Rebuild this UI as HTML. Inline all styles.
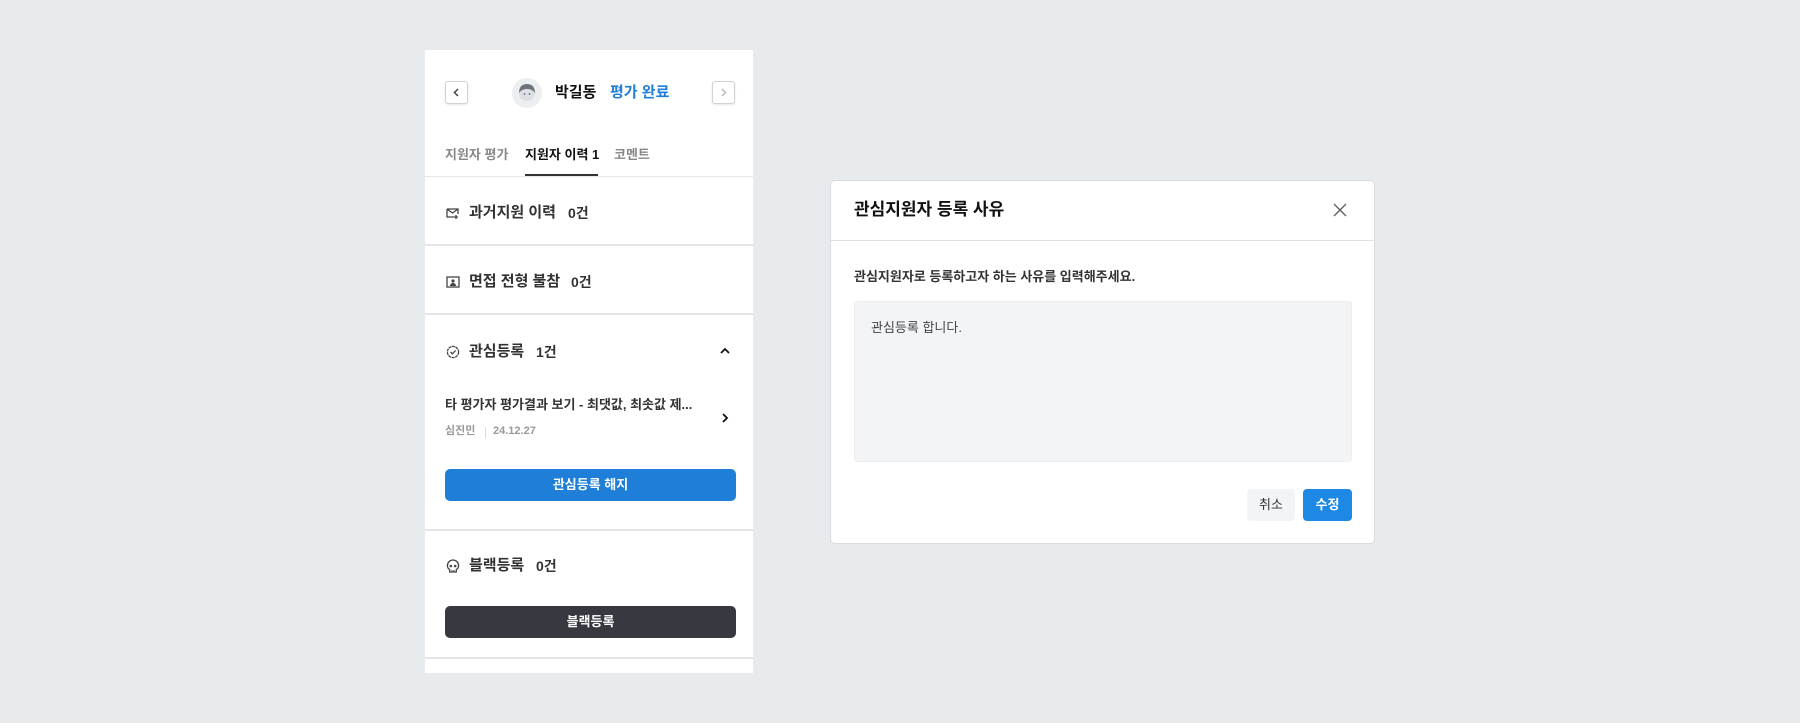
<!DOCTYPE html>
<html><head><meta charset="utf-8"><style>
*{margin:0;padding:0;box-sizing:border-box}
body{width:1800px;height:723px;background:#e8ebee;font-family:"Liberation Sans","Noto Sans CJK KR",sans-serif;position:relative;overflow:hidden;color:#222}
.a{position:absolute}
.panel{left:425px;top:50px;width:328px;height:623px;background:#fff}
.sep{left:425px;width:328px;height:2px;background:#e3e5e8}
.arr{width:23px;height:23px;border:1px solid #cfd2d6;border-radius:3px;background:#fff;box-shadow:0 1px 2px rgba(0,0,0,.1)}
.t{white-space:nowrap;line-height:1}
.row{font-size:15px;font-weight:bold;color:#333}
.cnt{font-size:14px;font-weight:bold;color:#333}
.btn{border-radius:5px;color:#fff;font-size:13px;font-weight:bold;text-align:center;line-height:32px}
</style></head><body>
<div class="a panel"></div>
<div class="a arr" style="left:445px;top:81px"><svg width="21" height="21" viewBox="0 0 21 21"><path d="M12 7l-3.5 3.5L12 14" fill="none" stroke="#444" stroke-width="1.5"/></svg></div>
<div class="a arr" style="left:712px;top:81px"><svg width="21" height="21" viewBox="0 0 21 21"><path d="M9 7l3.5 3.5L9 14" fill="none" stroke="#bbb" stroke-width="1.5"/></svg></div>
<svg class="a" style="left:512px;top:78px" width="30" height="30" viewBox="0 0 30 30"><circle cx="15" cy="15" r="15" fill="#eceef0"/><circle cx="15" cy="15" r="8" fill="#dcdfe3"/><path d="M7 15c0-6 3-9 8-9s8 3 8 9c-2-3-5-4-8-4s-6 1-8 4z" fill="#6e747b"/><circle cx="12.5" cy="16" r=".9" fill="#666"/><circle cx="17.5" cy="16" r=".9" fill="#666"/></svg>
<div class="a t" style="left:555px;top:85px;font-size:15px;font-weight:bold;color:#111">박길동</div>
<div class="a t" style="left:610px;top:85px;font-size:15px;font-weight:bold;color:#1e7ed8">평가 완료</div>
<div class="a t" style="left:445px;top:148px;font-size:13px;font-weight:bold;color:#888">지원자 평가</div>
<div class="a t" style="left:525px;top:148px;font-size:13px;font-weight:bold;color:#111">지원자 이력 1</div>
<div class="a t" style="left:614px;top:148px;font-size:13px;font-weight:bold;color:#888">코멘트</div>
<div class="a" style="left:525px;top:174px;width:73px;height:2px;background:#333"></div>
<div class="a sep" style="top:176px;height:1px"></div>

<svg class="a" style="left:446px;top:206px" width="14" height="14" viewBox="0 0 14 14"><path d="M1 3h11v5M1 3v8h8M1 3l5.5 4L12 3M10 9v4M8 11h4" fill="none" stroke="#444" stroke-width="1.3"/></svg>
<div class="a t row" style="left:469px;top:205px">과거지원 이력</div><div class="a t cnt" style="left:568px;top:206px">0건</div>
<div class="a sep" style="top:244px"></div>

<svg class="a" style="left:446px;top:275px" width="14" height="14" viewBox="0 0 14 14"><rect x="1" y="2" width="12" height="10" fill="none" stroke="#444" stroke-width="1.3"/><circle cx="7" cy="6" r="1.6" fill="#444"/><path d="M4 11c0-2 1.5-3 3-3s3 1 3 3" fill="#444"/></svg>
<div class="a t row" style="left:469px;top:274px">면접 전형 불참</div><div class="a t cnt" style="left:571px;top:275px">0건</div>
<div class="a sep" style="top:313px"></div>

<svg class="a" style="left:446px;top:345px" width="14" height="14" viewBox="0 0 14 14"><circle cx="7" cy="7" r="5.6" fill="none" stroke="#444" stroke-width="1.3" stroke-dasharray="3 .6"/><path d="M4.5 7l1.8 1.8L9.6 5.4" fill="none" stroke="#444" stroke-width="1.3"/></svg>
<div class="a t row" style="left:469px;top:344px">관심등록</div><div class="a t cnt" style="left:536px;top:345px">1건</div>
<svg class="a" style="left:719px;top:346px" width="12" height="10" viewBox="0 0 12 10"><path d="M2 7l4-4 4 4" fill="none" stroke="#111" stroke-width="1.8"/></svg>

<div class="a t" style="left:445px;top:398px;font-size:13px;font-weight:bold;color:#333">타 평가자 평가결과 보기 - 최댓값, 최솟값 제...</div>
<div class="a t" style="left:445px;top:426px;font-size:11px;font-weight:bold;color:#999">심진민</div>
<div class="a" style="left:485px;top:427px;width:1px;height:11px;background:#ddd"></div>
<div class="a t" style="left:493px;top:426px;font-size:11px;font-weight:bold;color:#999">24.12.27</div>
<svg class="a" style="left:720px;top:411px" width="10" height="14" viewBox="0 0 10 14"><path d="M3 3l4 4-4 4" fill="none" stroke="#111" stroke-width="1.8"/></svg>
<div class="a btn" style="left:445px;top:469px;width:291px;height:32px;background:#1e7ed8">관심등록 해지</div>
<div class="a sep" style="top:529px"></div>

<svg class="a" style="left:446px;top:559px" width="14" height="15" viewBox="0 0 14 15"><path d="M7 1a5.6 5.6 0 0 0-5.6 5.6c0 2 1 3.2 2.3 3.9V13h6.6v-2.5c1.3-.7 2.3-1.9 2.3-3.9A5.6 5.6 0 0 0 7 1z" fill="none" stroke="#444" stroke-width="1.3"/><circle cx="4.8" cy="7" r="1.3" fill="#444"/><circle cx="9.2" cy="7" r="1.3" fill="#444"/><path d="M6 13v-2M8 13v-2" stroke="#444"/></svg>
<div class="a t row" style="left:469px;top:558px">블랙등록</div><div class="a t cnt" style="left:536px;top:559px">0건</div>
<div class="a btn" style="left:445px;top:606px;width:291px;height:32px;background:#363a40">블랙등록</div>
<div class="a sep" style="top:657px"></div>

<div class="a" style="left:830px;top:180px;width:545px;height:364px;background:#fff;border:1px solid #d8dbdf;border-radius:5px"></div>
<div class="a t" style="left:854px;top:201px;font-size:17px;font-weight:bold;color:#111">관심지원자 등록 사유</div>
<svg class="a" style="left:1332px;top:202px" width="16" height="16" viewBox="0 0 16 16"><path d="M2 2l12 12M14 2L2 14" stroke="#666" stroke-width="1.5"/></svg>
<div class="a" style="left:831px;top:240px;width:543px;height:1px;background:#dfe1e4"></div>
<div class="a t" style="left:854px;top:270px;font-size:13px;font-weight:bold;color:#333">관심지원자로 등록하고자 하는 사유를 입력해주세요.</div>
<div class="a" style="left:854px;top:301px;width:498px;height:161px;background:#f3f4f6;border:1px solid #eceef1;border-radius:3px"></div>
<div class="a t" style="left:871px;top:321px;font-size:13px;color:#444">관심등록 합니다.</div>
<div class="a" style="left:1247px;top:489px;width:48px;height:32px;background:#f3f4f6;border-radius:4px;font-size:13px;line-height:32px;text-align:center;color:#333">취소</div>
<div class="a" style="left:1303px;top:489px;width:49px;height:32px;background:#1e88e5;border-radius:4px;font-size:13px;font-weight:bold;line-height:32px;text-align:center;color:#fff">수정</div>
</body></html>
